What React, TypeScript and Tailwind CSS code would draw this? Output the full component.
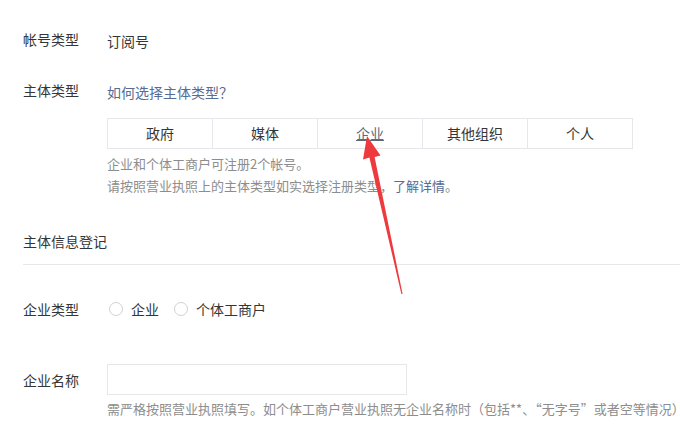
import React from "react";

const types = ["政府", "媒体", "企业", "其他组织", "个人"];

const Row = ({ label, children, className = "" }: { label: string; children: React.ReactNode; className?: string }) => (
  <div className={`flex ${className}`}>
    <div className="w-[84px] shrink-0 text-[14px] leading-[22px] text-[#353535]">{label}</div>
    <div className="flex-1 min-w-0">{children}</div>
  </div>
);

const Radio = ({ label }: { label: string }) => (
  <label className="flex items-center gap-[8px] text-[14px] leading-[22px] text-[#353535]">
    <span className="w-[14px] h-[14px] rounded-full border border-[#d2d2d2] bg-white" />
    {label}
  </label>
);

export default function App() {
  return (
    <div
      className="relative w-[680px] h-[445px] overflow-hidden bg-white pl-[23px] pt-[28px]"
      style={{ fontFamily: '"Noto Sans CJK SC", "Noto Sans", sans-serif' }}
    >
      <Row label="帐号类型">
        <span className="text-[14px] leading-[22px] text-[#353535]">订阅号</span>
      </Row>

      <Row label="主体类型" className="mt-[27px]">
        <a className="text-[14px] leading-[22px] text-[#576b95]">如何选择主体类型？</a>
        <div className="mt-[15px] w-[526px] flex border border-[#e7e7eb]">
          {types.map((t, i) => (
            <div
              key={t}
              className={`flex-1 h-[29px] flex items-center justify-center text-[14px] text-[#353535] ${
                i > 0 ? "border-l border-[#e7e7eb]" : ""
              }`}
            >
              {t === "企业" ? <span className="underline text-[#5a6b80]">{t}</span> : t}
            </div>
          ))}
        </div>
        <div className="mt-[4px] text-[13px] leading-[22px] text-[#8d8d8d]">
          <p>企业和个体工商户可注册2个帐号。</p>
          <p>
            请按照营业执照上的主体类型如实选择注册类型，<a className="text-[#576b95]">了解详情</a>。
          </p>
        </div>
      </Row>

      <div className="mt-[33px] text-[14px] leading-[22px] text-[#353535]">主体信息登记</div>
      <div className="mt-[12px] border-t border-[#e7e7eb]" />

      <Row label="企业类型" className="mt-[33px]">
        <div className="flex gap-[15px] pl-[2px]">
          <Radio label="企业" />
          <Radio label="个体工商户" />
        </div>
      </Row>

      <Row label="企业名称" className="mt-[44px] items-center">
        <div className="w-[300px] h-[31px] border border-[#e7e7eb]" />
      </Row>
      <div className="pl-[84px] mt-[3px] text-[13px] leading-[22px] text-[#8d8d8d] whitespace-nowrap">
        需严格按照营业执照填写。如个体工商户营业执照无企业名称时（包括**、“无字号”或者空等情况），请填写个体工商户
      </div>

      <svg className="absolute left-0 top-0 pointer-events-none" width="680" height="445">
        <polygon
          points="367,136 380.5,155.6 374.6,156.9 402.6,294 401.4,294 369.4,157.6 363,159.4"
          fill="#ee3a3f"
        />
      </svg>
    </div>
  );
}
